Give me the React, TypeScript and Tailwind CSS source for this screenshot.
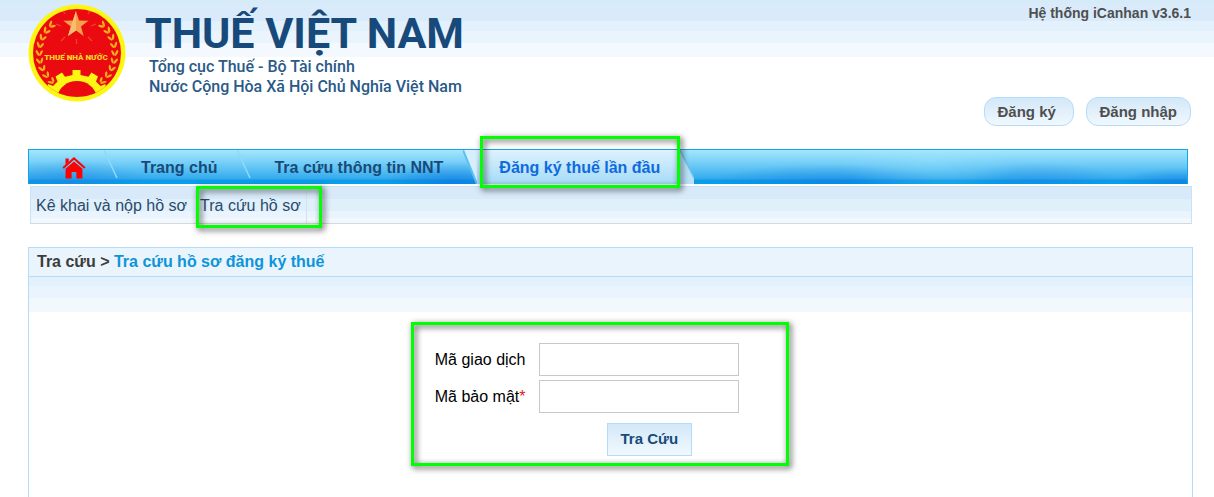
import React from 'react';

const laurel = [0, 1, 2, 3, 4, 5, 6, 7, 8];

function LaurelBranch() {
  return (
    <g fill="#f3b01c">
      {laurel.map((i) => (
        <g key={i} transform={`rotate(${-i * 12 + 48} 49 49)`}>
          <ellipse cx="9.500" cy="49" rx="1.200" ry="3.200" transform="rotate(-28 9.500 49)" />
          <ellipse cx="13" cy="49" rx="1.200" ry="3" transform="rotate(28 13 49)" />
        </g>
      ))}
    </g>
  );
}

function Emblem() {
  return (
    <svg viewBox="0 0 98 98" className="h-[98px] w-[98px] shrink-0" role="img" aria-label="Thuế Nhà Nước">
      <defs>
        <clipPath id="disc">
          <circle cx="49" cy="49" r="44" />
        </clipPath>
      </defs>
      <circle cx="49" cy="49" r="48.5" fill="#fdf512" />
      <circle cx="49" cy="49" r="44" fill="#ea0a10" />
      <LaurelBranch />
      <g transform="translate(98 0) scale(-1 1)">
        <LaurelBranch />
      </g>
      <g stroke="#f2452c" strokeWidth="1.2">
        <path d="M37 10l-2-3M60 10l2-3M33 22l-5-2M63 22l5-2M37 33l-4 4M60 33l4 4M48.500 35v5" />
      </g>
      <path d="M48 7l3 9.500 9.500.2-7.500 5.800 2.700 9.500-7.700-5.500-8 5.500 2.900-9.500-7.600-5.800 9.600-.2z" fill="#f5a04a" />
      <path d="M48 7v19.500l-8 5.500 2.900-9.500z" fill="#f7bd72" />
      <g clipPath="url(#disc)">
        <path
          d="M44.500 66h8v5l8 1.800 3-4.300 6.500 4-2 5 4.500 4.500 5-2v9l-3 4H24l-4-4v-9l5 2 4.500-4.500-2-5 6.500-4 3 4.300 7.500-1.800z"
          fill="#fdf512"
        />
        <path d="M29 92c3-9 10-15 20-15s17 6 20 15c-10 8-30 8-40 0z" fill="#ea0a10" />
      </g>
      <text
        x="48"
        y="56"
        textAnchor="middle"
        className="fill-[#fdd72a] font-['Roboto',sans-serif] text-[8px] font-black"
      >
        THUẾ NHÀ NƯỚC
      </text>
    </svg>
  );
}

function HomeIcon() {
  return (
    <svg viewBox="0 0 24 24" className="h-6 w-6" fill="#ff0000" aria-hidden="true">
      <path d="M3.500 2.500h3.200v3.300l-3.200 3.300z" />
      <path d="M12 1L.5 11.300l1.300 1.500L12 3.700l10.200 9.100 1.300-1.500z" />
      <path d="M12 5.400L3.600 12.800V22.500h6v-6.600h4.800v6.600h6v-9.700z" />
    </svg>
  );
}

function Separator() {
  return (
    <svg viewBox="0 0 14 34" className="h-[34px] w-[14px] shrink-0" aria-hidden="true">
      <path d="M0 0L13 28" stroke="#8bd9fb" strokeWidth="1.600" />
    </svg>
  );
}

function TabEdgeLeft() {
  return (
    <svg viewBox="0 0 14 34" className="h-[34px] w-[14px] shrink-0" aria-hidden="true">
      <path d="M0 0H14V34z" fill="#d6effc" />
      <path d="M0 0L14 34" stroke="#5cc0f2" strokeWidth="2" />
    </svg>
  );
}

function TabEdgeRight() {
  return (
    <svg viewBox="0 0 14 34" className="h-[34px] w-[14px] shrink-0" aria-hidden="true">
      <path d="M0 0L14 28V34H0z" fill="#b9e1f8" />
      <path d="M0 0L14 28" stroke="#6cc6ee" strokeWidth="1.500" />
    </svg>
  );
}

function Highlight({ className }: { className: string }) {
  return (
    <span
      aria-hidden="true"
      className={`pointer-events-none absolute z-10 border-[3px] border-[#00ff00] drop-shadow-[2px_2px_3px_rgba(0,0,0,0.75)] ${className}`}
    />
  );
}

const pill =
  'h-[29px] min-w-[90px] rounded-xl border border-[#b5dcfb] bg-linear-to-b from-[#d3e8f8] to-[#f0f8fe] px-[13px] text-left text-[15px] leading-[27px] font-bold text-[#4f4f4f]';
const field = 'h-[33px] w-[200px] border border-[#c8c8c8] bg-white px-2 text-base text-black';

export default function App() {
  return (
    <div className="flex min-h-screen flex-col bg-white bg-[linear-gradient(#d5ebf7_0_3px,#d9ebfa_3px_21px,#e2f1fb_21px_31px,#e9f4fd_31px_43px,#f3f9fe_43px_57px,#ffffff_57px)] pr-[21px] pl-7 font-['Liberation_Sans',Arial,sans-serif] text-base">
      <header className="flex justify-between pt-1 pr-0.5 pb-[23px]">
        <div className="flex gap-[19px]">
          <Emblem />
          <div className="pt-1.5 font-['Roboto',sans-serif] text-[#174a7a]">
            <h1 className="text-[43px] leading-[47px] font-bold whitespace-nowrap">THUẾ VIỆT NAM</h1>
            <p className="pl-1 text-base leading-5 font-medium whitespace-nowrap text-[#2a5a87]">
              Tổng cục Thuế - Bộ Tài chính
              <br />
              Nước Cộng Hòa Xã Hội Chủ Nghĩa Việt Nam
            </p>
          </div>
        </div>
        <div className="flex flex-col items-end gap-[75px]">
          <p className="text-sm leading-[18px] font-bold text-[#4f4f4f]">Hệ thống iCanhan v3.6.1</p>
          <div className="flex gap-3">
            <button type="button" className={pill}>Đăng ký</button>
            <button type="button" className={pill}>Đăng nhập</button>
          </div>
        </div>
      </header>

      <nav className="mr-[5px] flex h-[35px] border-x border-t border-[#17a5e8] bg-[radial-gradient(ellipse_90px_30px_at_900px_12px,#a5ebfc4d,#a5ebfc00),radial-gradient(ellipse_120px_20px_at_800px_34px,#0a6fe073,#0a6fe000),radial-gradient(ellipse_80px_22px_at_1010px_34px,#1c7ae659,#1c7ae600),radial-gradient(ellipse_70px_22px_at_425px_34px,#0a6fe099,#0a6fe000),radial-gradient(ellipse_80px_24px_at_40px_34px,#1c80e080,#1c80e000),radial-gradient(ellipse_60px_16px_at_1150px_34px,#0a6fe080,#0a6fe000),linear-gradient(#a3e6fc_0,#7dd2f8_11px,#53bdf2_21px,#33a9ec_29px,#0a9dea_30px,#0a9dea_34px)] font-bold whitespace-nowrap text-[#174a7a]">
        <a href="#home" aria-label="Trang đầu" className="w-[75px] shrink-0 pt-1.5 pl-[33px]">
          <HomeIcon />
        </a>
        <Separator />
        <a href="#trang-chu" className="pr-5 pl-[23px] leading-[35px]">Trang chủ</a>
        <Separator />
        <a href="#tra-cuu-nnt" className="pr-5 pl-[23px] leading-[35px]">Tra cứu thông tin NNT</a>
        <TabEdgeLeft />
        <a href="#dang-ky-thue" className="relative bg-linear-to-b from-[#def2fd] to-[#a4dbf7] pr-5 pl-[22px] leading-[35px] text-[#0f6ade]">
          Đăng ký thuế lần đầu
          <Highlight className="-top-3.5 right-0 -bottom-1 left-[3px]" />
        </a>
        <TabEdgeRight />
      </nav>

      <nav className="mt-0.5 mr-px ml-0.5 flex h-[38px] border border-[#c9e2f6] border-b-[#d5d9de] bg-[linear-gradient(#d8eafa_0_12px,#e0f0fb_12px_24px,#e9f4fe_24px_31px,#f2f9fe_31px)] leading-[37px] whitespace-nowrap text-[#2a4a6b]">
        <a href="#ke-khai" className="border-r border-[#d5e8f6] pr-[9px] pl-[5px]">Kê khai và nộp hồ sơ</a>
        <a href="#tra-cuu-ho-so" className="relative border-r border-[#cfe3f3] pr-[5px] pl-[3px]">
          Tra cứu hồ sơ
          <Highlight className="-top-px -right-4 -bottom-[5px] -left-px" />
        </a>
      </nav>

      <main className="mt-[23px] flex grow flex-col border border-b-0 border-[#b5dbfc] bg-[linear-gradient(#e2f1fb_0_38px,#eaf4fe_38px_50px,#f3f8fd_50px_64px,#ffffff_64px)]">
        <h2 className="border-b border-[#b5dbfc] bg-[#e9f4fd] pl-2 leading-7 font-bold text-[#3c3c3c]">
          Tra cứu &gt; <span className="text-[#0d94da]">Tra cứu hồ sơ đăng ký thuế</span>
        </h2>
        <form className="relative mt-[45px] mr-[22px] flex w-[378px] flex-col gap-1 self-center pt-[21px] pb-2.5 text-black">
          <div className="flex items-center">
            <label htmlFor="ma-giao-dich" className="w-[128px] pr-[13px] text-right">Mã giao dịch</label>
            <input id="ma-giao-dich" type="text" className={field} />
          </div>
          <div className="flex items-center">
            <label htmlFor="ma-bao-mat" className="w-[128px] pr-[13px] text-right">
              Mã bảo mật<span className="text-[#e02020]">*</span>
            </label>
            <input id="ma-bao-mat" type="text" className={field} />
          </div>
          <button
            type="submit"
            className="mt-1.5 ml-[196px] h-[33px] self-start border border-[#b5dbfb] bg-linear-to-b from-[#d3e8f8] to-[#f1f9fe] px-[13px] text-[15px] font-bold text-[#174a7a]"
          >
            Tra Cứu
          </button>
          <Highlight className="inset-0" />
        </form>
      </main>
    </div>
  );
}
